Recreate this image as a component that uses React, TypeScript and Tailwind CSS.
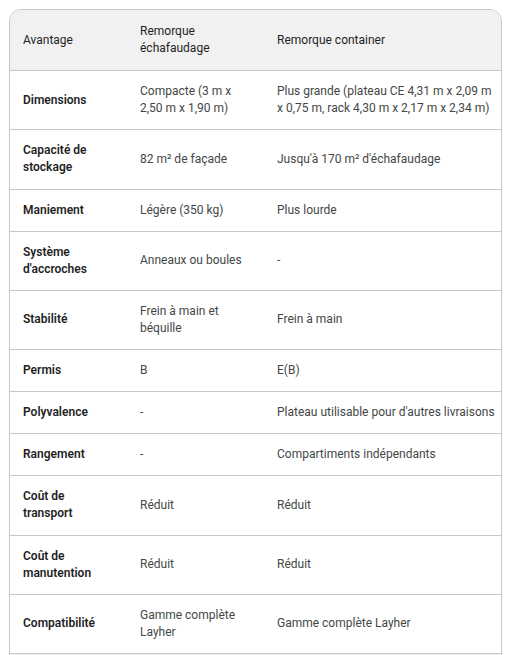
const rows: [string, string, string][] = [
  ["Dimensions", "Compacte (3 m x 2,50 m x 1,90 m)", "Plus grande (plateau CE 4,31 m x 2,09 m x 0,75 m, rack 4,30 m x 2,17 m x 2,34 m)"],
  ["Capacité de stockage", "82 m² de façade", "Jusqu'à 170 m² d'échafaudage"],
  ["Maniement", "Légère (350 kg)", "Plus lourde"],
  ["Système d'accroches", "Anneaux ou boules", "-"],
  ["Stabilité", "Frein à main et béquille", "Frein à main"],
  ["Permis", "B", "E(B)"],
  ["Polyvalence", "-", "Plateau utilisable pour d'autres livraisons"],
  ["Rangement", "-", "Compartiments indépendants"],
  ["Coût de transport", "Réduit", "Réduit"],
  ["Coût de manutention", "Réduit", "Réduit"],
  ["Compatibilité", "Gamme complète Layher", "Gamme complète Layher"],
]

export default function App() {
  return (
    <div className="bg-white min-h-[655px] pt-[9px] pl-[9px] font-['Roboto',sans-serif] text-[12px] leading-[17.1px]">
      <div className="w-[493px] rounded-t-[12px] border border-[#c7c7c7] overflow-hidden">
        {/* Header */}
        <div className="grid grid-cols-[117px_137px_1fr] items-center bg-[#f1f1f1] border-b border-[#c7c7c7] text-[#1f1f1f]">
          <div className="pl-[13px] pr-[18px] py-[13px]">Avantage</div>
          <div className="pl-[13px] pr-[13px] py-[13px]">Remorque échafaudage</div>
          <div className="pl-[13px] pr-[4px] py-[13px]">Remorque container</div>
        </div>

        {rows.map(([label, a, b]) => (
          <div key={label} className="grid grid-cols-[117px_137px_1fr] items-center border-b border-[#c7c7c7]">
            <div className="pl-[13px] pr-[18px] py-[12px] font-semibold text-[#1f1f1f]">{label}</div>
            <div className="pl-[13px] pr-[13px] py-[12px] text-[#444746]">{a}</div>
            <div className="pl-[13px] pr-[4px] py-[12px] text-[#444746]">{b}</div>
          </div>
        ))}

        <div className="h-[20px] bg-[#f1f1f1]" />
      </div>
    </div>
  )
}
